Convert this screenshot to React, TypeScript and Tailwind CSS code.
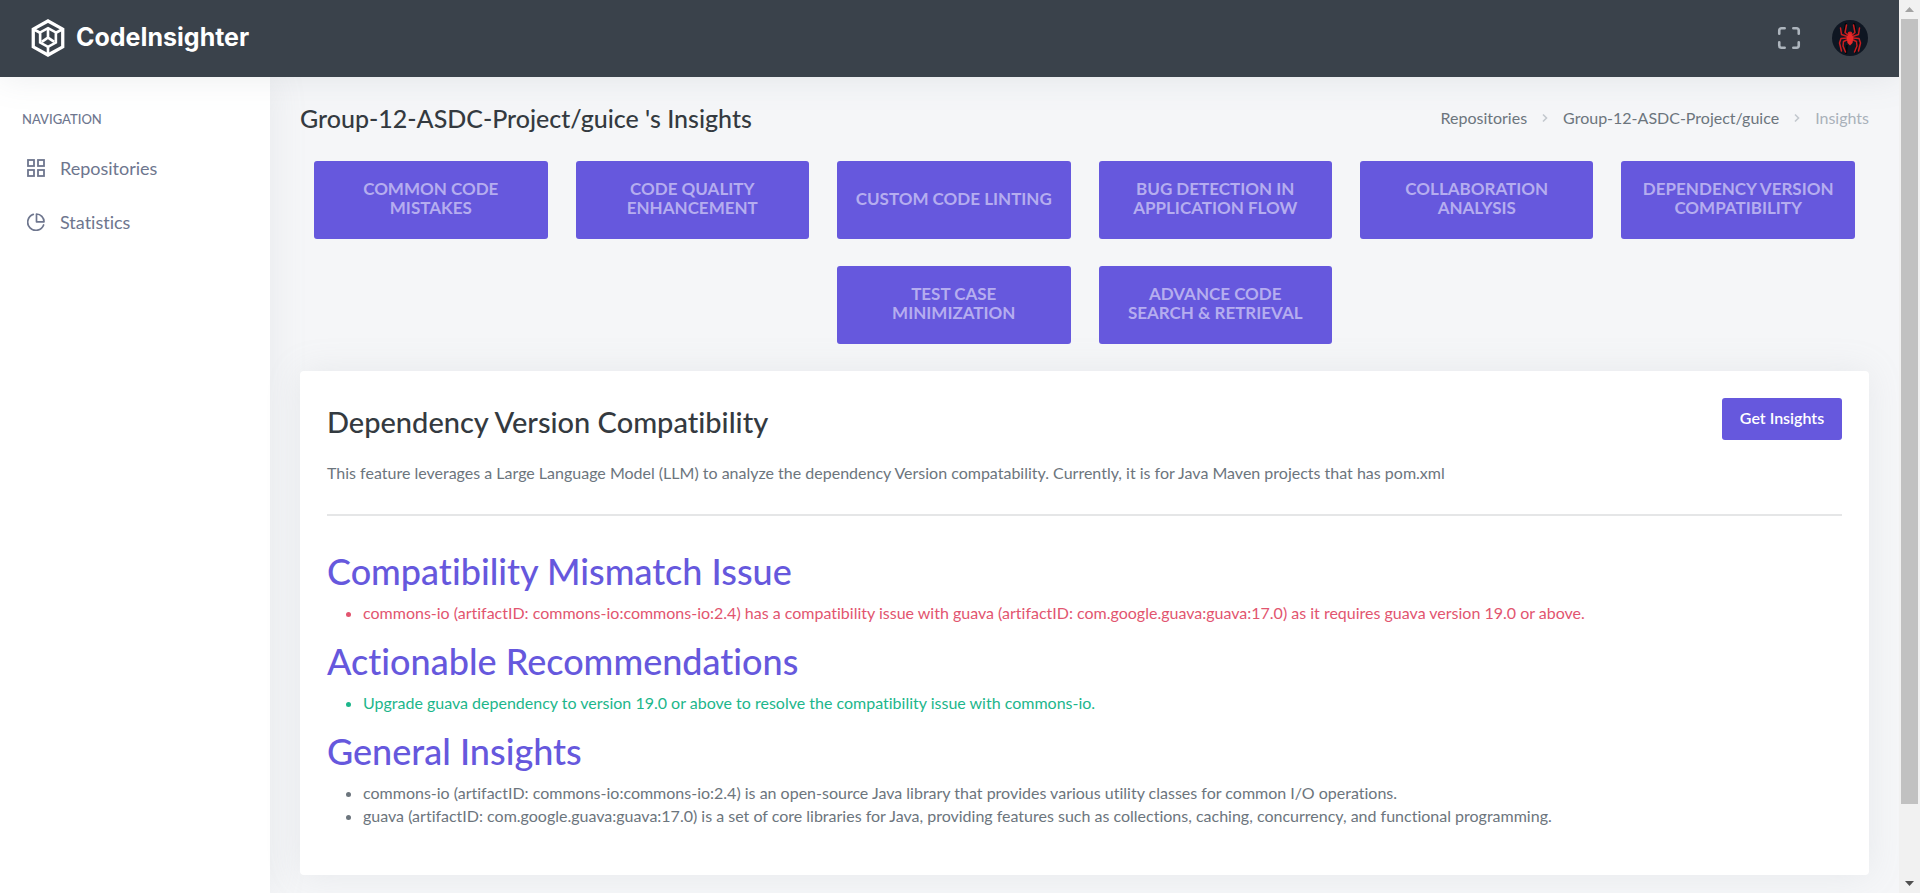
import React, { Fragment } from "react";
import { Maximize } from "lucide-react";

const features = [
  "Common Code Mistakes",
  "Code Quality Enhancement",
  "Custom Code Linting",
  "Bug Detection in Application Flow",
  "Collaboration Analysis",
  "Dependency Version Compatibility",
  "Test Case Minimization",
  "Advance Code Search & Retrieval",
];

const sections = [
  {
    title: "Compatibility Mismatch Issue",
    color: "text-[#e2556f]",
    items: [
      "commons-io (artifactID: commons-io:commons-io:2.4) has a compatibility issue with guava (artifactID: com.google.guava:guava:17.0) as it requires guava version 19.0 or above.",
    ],
  },
  {
    title: "Actionable Recommendations",
    color: "text-[#1cb68b]",
    items: [
      "Upgrade guava dependency to version 19.0 or above to resolve the compatibility issue with commons-io.",
    ],
  },
  {
    title: "General Insights",
    color: "text-[#6c757d]",
    items: [
      "commons-io (artifactID: commons-io:commons-io:2.4) is an open-source Java library that provides various utility classes for common I/O operations.",
      "guava (artifactID: com.google.guava:guava:17.0) is a set of core libraries for Java, providing features such as collections, caching, concurrency, and functional programming.",
    ],
  },
];

const crumbs = [{ label: "Repositories" }, { label: "Group-12-ASDC-Project/guice" }];

function LogoMark() {
  return (
    <svg viewBox="34 26 102 116" className="h-[38px] w-[34px]" fill="none" stroke="currentColor" strokeWidth="10" strokeLinejoin="miter" aria-hidden="true">
      <path d="M85 32 130 57V111L85 136 40 111V57Z" />
      <path d="M85 54 109 67V98L85 111 61 98V67Z" strokeWidth="8" />
      <path d="M42 58 61 68M128 58 109 68M85 111V136" strokeWidth="8" />
      <path d="M85 56V83L66 96M85 83 104 96" strokeWidth="8" />
    </svg>
  );
}

function DashboardIcon() {
  return (
    <svg viewBox="0 0 18 18" className="size-[18px]" fill="none" stroke="currentColor" strokeWidth="1.8" aria-hidden="true">
      <rect x="1" y="1" width="6" height="6" />
      <rect x="11" y="1" width="6" height="6" />
      <rect x="1" y="11" width="6" height="6" />
      <rect x="11" y="11" width="6" height="6" />
    </svg>
  );
}

function PieIcon() {
  return (
    <svg viewBox="0 0 18 18" className="size-[18px]" fill="none" stroke="currentColor" strokeWidth="1.7" strokeLinejoin="round" strokeLinecap="round" aria-hidden="true">
      <path d="M9.5 1v7.8H17A7.7 7.7 0 0 0 9.5 1Z" />
      <path d="M6.3 1.4A8.2 8.2 0 1 0 16.6 12" />
    </svg>
  );
}

function SpiderAvatar() {
  return (
    <svg viewBox="0 0 36 36" className="size-9" aria-hidden="true">
      <circle cx="18" cy="18" r="18" fill="#0e1622" />
      <g fill="none" stroke="#04070b" strokeWidth="2">
        <path d="M14 3 12 13M15 25 14 34M22 3 24 13M26 22 23 33" />
      </g>
      <g fill="none" stroke="#c91d1f" strokeWidth="1.5" strokeLinejoin="round" strokeLinecap="round">
        <path d="M16 15 13 12.500 14.500 5" />
        <path d="M20 15 23 12.500 21.500 5" />
        <path d="M15.500 16.500 9.500 14.500 8.500 8" />
        <path d="M20.500 16.500 26.500 14.500 27.500 8" />
        <path d="M15.500 18 9 18.500 7.500 23 9.500 31" />
        <path d="M20.500 18 27 18.500 28.500 23 26.500 31" />
        <path d="M16 19.500 11.500 21.500 11 26 13.500 32" />
        <path d="M20 19.500 24.500 21.500 25 26 22.500 32" />
      </g>
      <ellipse cx="18" cy="14" rx="2.400" ry="2.400" fill="#d32022" />
      <path d="M18 13 21.500 17 20.500 23 18 25.500 15.500 23 14.500 17Z" fill="#e92a2a" />
    </svg>
  );
}

function Chevron() {
  return (
    <svg viewBox="0 0 8 10" className="h-[10px] w-[8px] text-[#c3c8ce]" fill="none" stroke="currentColor" strokeWidth="1.6" aria-hidden="true">
      <path d="M2 1.500 5.500 5 2 8.500" />
    </svg>
  );
}

export default function App() {
  return (
    <div className="flex min-h-screen bg-[#f5f6f8] font-['Lato',sans-serif] text-base text-[#6c757d] [font-variant-ligatures:none]">
      <div className="flex min-w-0 flex-1 flex-col">
        <header className="z-20 flex h-[77px] items-center justify-between bg-[#3a424b] px-[31px] pb-[2px] shadow-[0_0_35px_0_rgba(120,128,140,0.15)]">
          <a href="#" className="flex items-center gap-[11px] text-white">
            <LogoMark />
            <span className="pb-[2px] font-['Inter',sans-serif] text-[25px] leading-8 font-bold">CodeInsighter</span>
          </a>
          <div className="flex items-center gap-[30px]">
            <button type="button" aria-label="Full screen" className="text-[#adb5bd]">
              <Maximize size={26} strokeWidth={2.4} />
            </button>
            <button type="button" aria-label="Account" className="rounded-full">
              <SpiderAvatar />
            </button>
          </div>
        </header>

        <div className="flex flex-1">
          <aside className="w-[270px] shrink-0 bg-white pt-8 text-[#6e768e] shadow-[0_0_35px_0_rgba(154,161,171,0.15)]">
            <h2 className="px-[22px] text-[13px] leading-5 font-medium uppercase">Navigation</h2>
            <nav className="mt-3 text-[18px]">
              <a href="#" className="flex h-[54px] items-center gap-[15px] px-[27px]">
                <DashboardIcon />
                Repositories
              </a>
              <a href="#" className="flex h-[54px] items-center gap-[15px] px-[27px]">
                <PieIcon />
                Statistics
              </a>
            </nav>
          </aside>

          <main className="min-w-0 flex-1 px-[30px] pb-[18px]">
            <div className="flex h-[84px] items-center justify-between pb-[2px]">
              <h1 className="text-[25px] leading-8 font-medium text-[#343a40]">
                Group-12-ASDC-Project/guice 's Insights
              </h1>
              <nav aria-label="Breadcrumb" className="flex items-center gap-[14px]">
                {crumbs.map((c) => (
                  <Fragment key={c.label}>
                    <a href="#">{c.label}</a>
                    <Chevron />
                  </Fragment>
                ))}
                <span className="text-[#a9b1ba]">Insights</span>
              </nav>
            </div>

            <div className="flex flex-wrap justify-center">
              {features.map((f) => (
                <div key={f} className="mb-[27px] w-1/6 px-[14px]">
                  <button
                    type="button"
                    className="flex h-[78px] w-full items-center justify-center rounded-[3px] bg-[#6658dd] px-[17px] pb-1 text-center text-[17px] leading-[19px] font-bold text-[#b5adef] uppercase"
                  >
                    {f}
                  </button>
                </div>
              ))}
            </div>

            <section className="rounded-[4px] bg-white px-[27px] pt-[27px] pb-12 shadow-[0_0_35px_0_rgba(154,161,171,0.15)]">
              <div className="flex items-start justify-between">
                <h2 className="mt-2 text-[29px] leading-8 font-medium text-[#343a40]">Dependency Version Compatibility</h2>
                <button type="button" className="h-[42px] w-[120px] rounded-[3px] bg-[#6658dd] pb-[3px] font-semibold text-white">
                  Get Insights
                </button>
              </div>
              <p className="mt-[21px] leading-[23px]">
                This feature leverages a Large Language Model (LLM) to analyze the dependency Version compatability.
                Currently, it is for Java Maven projects that has pom.xml
              </p>
              <hr className="mt-[30px] mb-[34px] border-t-2 border-[#e5e6e7]" />
              <div className="flex flex-col gap-4">
                {sections.map((s) => (
                  <div key={s.title}>
                    <h3 className="text-4xl leading-[42px] font-medium text-[#6658dd]">{s.title}</h3>
                    <ul className={"mt-[9px] list-disc pl-9 leading-[23px] " + s.color}>
                      {s.items.map((i) => (
                        <li key={i}>{i}</li>
                      ))}
                    </ul>
                  </div>
                ))}
              </div>
            </section>
          </main>
        </div>
      </div>

      <div aria-hidden="true" className="z-30 flex w-[21px] shrink-0 flex-col items-center bg-[#f1f1f1]">
        <svg viewBox="0 0 21 19" className="h-[19px] w-[21px]">
          <path d="M6 12h9l-4.500-5z" fill="#a3a3a3" />
        </svg>
        <div className="w-[17px] flex-[785] bg-[#c1c1c1]" />
        <div className="flex-[70]" />
        <svg viewBox="0 0 21 19" className="h-[19px] w-[21px]">
          <path d="M6 7h9l-4.500 5z" fill="#505050" />
        </svg>
      </div>
    </div>
  );
}
